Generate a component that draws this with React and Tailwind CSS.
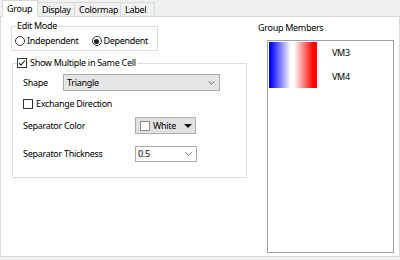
import React from 'react';

function Radio({ checked, label }) {
  return (
    <div className="flex items-center gap-[2px]">
      <span className="w-[10px] h-[10px] rounded-full border border-[#333] flex items-center justify-center bg-white">
        {checked && <span className="w-[5px] h-[5px] rounded-full bg-[#222]" />}
      </span>
      <span>{label}</span>
    </div>
  );
}

function Check({ checked }) {
  return (
    <span className="w-[10px] h-[10px] border border-[#333] bg-white flex items-center justify-center shrink-0">
      {checked && (
        <svg width="8" height="8" viewBox="0 0 8 8">
          <path d="M1 4.2 L3 6.2 L7 1.5" fill="none" stroke="#222" strokeWidth="1.1" />
        </svg>
      )}
    </span>
  );
}

function Chevron() {
  return (
    <svg width="7" height="4" viewBox="0 0 7 4">
      <path d="M0.5 0.5 L3.5 3.3 L6.5 0.5" fill="none" stroke="#666" strokeWidth="0.9" />
    </svg>
  );
}

const TABS = [
  { name: 'Group', w: 'w-[36px]' },
  { name: 'Display', w: 'w-[37px]' },
  { name: 'Colormap', w: 'w-[46px]' },
  { name: 'Label', w: 'w-[34px]' },
];

export default function App() {
  return (
    <div className="w-[400px] h-[260px] bg-[#f0f0f0] text-black text-[9px] tracking-[-0.3px] leading-[12px] font-['Segoe_UI','Noto_Sans',sans-serif]">
      {/* tab strip */}
      <div className="h-[16px] flex items-end pl-[2px]">
        {TABS.map((t, i) =>
          i === 0 ? (
            <div key={t.name} className={`${t.w} h-[17px] -mb-px relative z-10 bg-white border-x border-t border-[#d9d9d9] pl-[4px] flex items-center`}>
              {t.name}
            </div>
          ) : (
            <div key={t.name} className={`${t.w} h-[14px] border-t border-r border-[#d9d9d9] pl-[4px] flex items-center`}>
              {t.name}
            </div>
          )
        )}
      </div>

      {/* panel */}
      <div className="h-[241px] bg-white border border-[#d9d9d9] flex">
        {/* left column */}
        <div className="w-[250px] pl-[10px] pt-[9px]">
          {/* Edit Mode */}
          <div className="relative w-[147px] h-[25px] border border-[#dcdcdc] pl-[3px] pt-[8px]">
            <span className="absolute left-[4px] top-[-7px] px-[1px] bg-white">Edit Mode</span>
            <div className="flex items-center gap-[13px]">
              <Radio label="Independent" />
              <Radio checked label="Dependent" />
            </div>
          </div>

          {/* Show Multiple */}
          <div className="relative w-[235px] h-[115px] border border-[#dcdcdc] mt-[12px] ml-[1px] pl-[10px] pt-[10px]">
            <span className="absolute left-[4px] top-[-7px] pr-[2px] bg-white flex items-center gap-[3px]">
              <Check checked />
              Show Multiple in Same Cell
            </span>

            <div className="h-[17px] flex items-center">
              <span className="w-[40px]">Shape</span>
              <div className="w-[157px] h-[17px] bg-[#e5e5e5] border border-[#acacac] flex items-center justify-between pl-[3px] pr-[4px]">
                <span>Triangle</span>
                <Chevron />
              </div>
            </div>

            <div className="h-[12px] mt-[7px] flex items-center gap-[3px]">
              <Check />
              <span>Exchange Direction</span>
            </div>

            <div className="h-[17px] mt-[7px] flex items-center">
              <span className="w-[112px]">Separator Color</span>
              <div className="w-[61px] h-[17px] bg-[#e1e1e1] border border-[#adadad] flex items-center pl-[4px] pr-[3px]">
                <span className="w-[10px] h-[10px] bg-white border border-[#8c8c8c]" />
                <span className="ml-[3px] flex-1">White</span>
                <svg width="8" height="4" viewBox="0 0 8 4">
                  <path d="M0 0 L8 0 L4 4 Z" fill="#111" />
                </svg>
              </div>
            </div>

            <div className="h-[17px] mt-[11px] flex items-center">
              <span className="w-[112px]">Separator Thickness</span>
              <div className="w-[62px] h-[16px] bg-white border border-[#abadb3] flex items-center justify-between pl-[2px] pr-[4px]">
                <span>0.5</span>
                <Chevron />
              </div>
            </div>
          </div>
        </div>

        {/* right column */}
        <div className="flex-1 pt-[5px]">
          <div className="ml-[7px]">Group Members</div>
          <div className="ml-[16px] mt-[6px] w-[127px] h-[213px] border border-[#a0a0aa] p-[1px] flex items-start">
            <div className="w-[48px] h-[46px] bg-[linear-gradient(to_right,#0000ff_3%,#ffffff_45%,#ffffff_52%,#ff0000_92%)]" />
            <div className="ml-[15px] flex flex-col">
              <span className="mt-[5px]">VM3</span>
              <span className="mt-[12px]">VM4</span>
            </div>
          </div>
        </div>
      </div>
    </div>
  );
}
